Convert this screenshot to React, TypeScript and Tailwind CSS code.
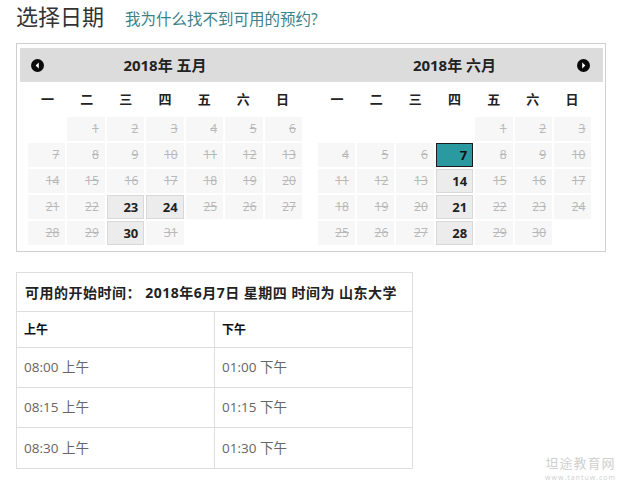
import React from "react";

type Cell = { d: number | null; s: "off" | "on" | "sel" | "none" };

function buildMonth(lead: number, days: number, on: number[], sel: number | null): Cell[] {
  const cells: Cell[] = [];
  for (let i = 0; i < lead; i++) cells.push({ d: null, s: "none" });
  for (let d = 1; d <= days; d++) {
    cells.push({ d, s: d === sel ? "sel" : on.includes(d) ? "on" : "off" });
  }
  while (cells.length % 7 !== 0) cells.push({ d: null, s: "none" });
  return cells;
}

const may = buildMonth(1, 31, [23, 24, 30], null);
const june = buildMonth(4, 30, [14, 21, 28], 7);
const dayNames = ["一", "二", "三", "四", "五", "六", "日"];

function Arrow({ dir }: { dir: "l" | "r" }) {
  return (
    <svg width="13" height="13" viewBox="0 0 13 13">
      <circle cx="6.5" cy="6.5" r="6.5" fill="#0a0a0a" />
      {dir === "l" ? (
        <polygon points="7.8,3.6 4.6,6.5 7.8,9.4" fill="#fff" />
      ) : (
        <polygon points="5.2,3.6 8.4,6.5 5.2,9.4" fill="#fff" />
      )}
    </svg>
  );
}

function MonthGrid({ cells, right }: { cells: Cell[]; right?: boolean }) {
  return (
    <div className={`${right ? "ml-[6px]" : "ml-[8px]"} w-[274px]`}>
      <div className="grid grid-cols-7 h-[35px] items-center">
        {dayNames.map((n) => (
          <div key={n} className="text-center text-[13px] font-bold text-[#222] pt-[1px]">
            {n}
          </div>
        ))}
      </div>
      <div className="grid grid-cols-7 gap-[2px]">
        {cells.map((c, i) => {
          if (c.s === "none") return <div key={i} className="h-[24px]" />;
          if (c.s === "off")
            return (
              <div
                key={i}
                className="h-[24px] bg-[#f7f7f7] text-right pr-[6px] leading-[24px] text-[12px] text-[#b8b8b8] line-through"
              >
                {c.d}
              </div>
            );
          if (c.s === "on")
            return (
              <div
                key={i}
                className="h-[24px] bg-[#ececec] border border-[#d8d8d8] text-right pr-[5px] leading-[22px] text-[13px] font-bold text-[#222]"
              >
                {c.d}
              </div>
            );
          return (
            <div
              key={i}
              className="h-[24px] bg-[#2b9aa0] border border-[#1a1a1a] text-right pr-[5px] leading-[22px] text-[13px] font-bold text-[#111]"
            >
              {c.d}
            </div>
          );
        })}
      </div>
    </div>
  );
}

export default function App() {
  const rows = [
    ["08:00 上午", "01:00 下午"],
    ["08:15 上午", "01:15 下午"],
    ["08:30 上午", "01:30 下午"],
  ];
  return (
    <div
      className="relative w-[620px] h-[481px] bg-white overflow-hidden text-[#333]"
      style={{ fontFamily: '"Open Sans", "Noto Sans CJK SC", sans-serif' }}
    >
      <div className="h-[43px] flex items-baseline pl-[16px] pt-[1px]">
        <span className="text-[22px] leading-[30px] text-[#333]">选择日期</span>
        <span className="ml-[21px] text-[15.5px] text-[#3b8186]">我为什么找不到可用的预约?</span>
      </div>

      <div className="ml-[16px] w-[590px] border border-[#cfcfcf] pt-[4px] pl-[3px] pr-[2px] pb-[6px]">
        <div className="relative h-[34px] bg-[#dcdcdc] grid grid-cols-2">
          <div className="ml-[8px] w-[274px] flex items-center justify-center text-[15px] font-bold text-[#222]">
            2018年 五月
          </div>
          <div className="ml-[6px] w-[274px] flex items-center justify-center text-[15px] font-bold text-[#222]">
            2018年 六月
          </div>
          <div className="absolute left-[11px] top-[11px]">
            <Arrow dir="l" />
          </div>
          <div className="absolute right-[13px] top-[11px]">
            <Arrow dir="r" />
          </div>
        </div>
        <div className="grid grid-cols-2">
          <MonthGrid cells={may} />
          <MonthGrid cells={june} right />
        </div>
      </div>

      <div className="ml-[16px] mt-[20px] w-[397px] border border-[#dedede]">
        <div className="h-[39px] flex items-center pl-[8px] text-[14px] tracking-[0.5px] font-bold text-[#222] border-b border-[#dedede] whitespace-nowrap">
          可用的开始时间： 2018年6月7日 星期四 时间为 山东大学
        </div>
        <div className="grid grid-cols-[198px_1fr] h-[36px] border-b border-[#dedede] text-[12px] font-bold text-[#111]">
          <div className="flex items-center pl-[7px] border-r border-[#dedede]">上午</div>
          <div className="flex items-center pl-[7px]">下午</div>
        </div>
        {rows.map((r, i) => (
          <div
            key={i}
            className={`grid grid-cols-[198px_1fr] h-[40px] text-[13.5px] text-[#666] ${
              i < rows.length - 1 ? "border-b border-[#dedede]" : ""
            }`}
          >
            <div className="flex items-center pl-[7px] border-r border-[#dedede]">{r[0]}</div>
            <div className="flex items-center pl-[7px]">{r[1]}</div>
          </div>
        ))}
      </div>

      <div className="absolute right-[4px] bottom-[-2px] flex flex-col items-center text-[#cfcfcf]">
        <span className="block h-[19px] text-[13px] leading-[19px] tracking-[1px]">坦途教育网</span>
        <span className="block h-[10px] text-[7px] leading-[10px] tracking-[1px]">www.tantuw.com</span>
      </div>
    </div>
  );
}
